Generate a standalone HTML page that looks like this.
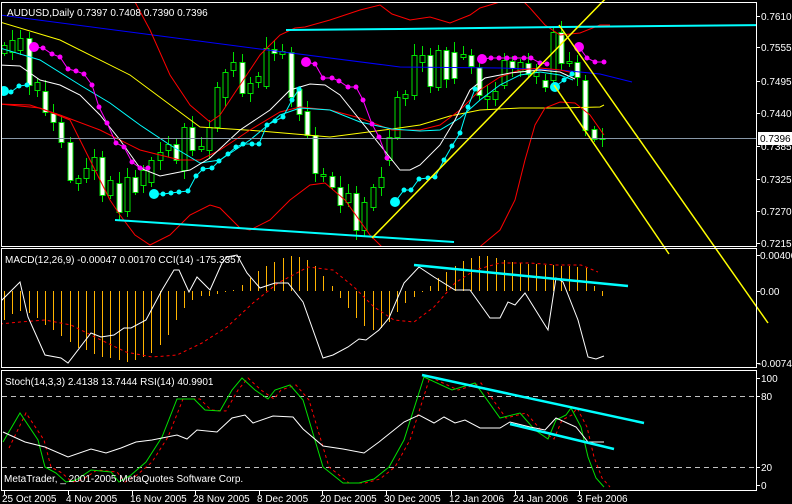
<!DOCTYPE html>
<html><head><meta charset="utf-8">
<style>
html,body{margin:0;padding:0;background:#000;overflow:hidden}
svg{display:block}
text{font-family:"Liberation Sans",sans-serif;font-size:10px;fill:#fff}
</style></head>
<body>
<svg id="c" width="792" height="504" viewBox="0 0 792 504" xmlns="http://www.w3.org/2000/svg">
<defs>
<clipPath id="cm"><rect x="2" y="3" width="754" height="243"/></clipPath>
<clipPath id="cd"><rect x="2" y="250" width="754" height="117"/></clipPath>
<clipPath id="cs"><rect x="2" y="372" width="754" height="118"/></clipPath>
</defs>
<rect width="792" height="504" fill="#000"/>
<g id="gm" clip-path="url(#cm)"></g>
<g id="gd" clip-path="url(#cd)"></g>
<g id="gs" clip-path="url(#cs)"></g>
<g id="top"></g>
<g fill="none" stroke="#fff" stroke-width="1">
<rect x="1.5" y="2.5" width="755" height="244"/>
<rect x="1.5" y="248.5" width="755" height="119"/>
<rect x="1.5" y="370.5" width="755" height="120"/>
</g>
<g id="ticks" stroke="#fff"></g>
<text x="7" y="16">AUDUSD,Daily  0.7397 0.7408 0.7390 0.7396</text>
<text x="5" y="263">MACD(12,26,9) -0.00047 0.00170  CCI(14) -175.3357</text>
<text x="5" y="385">Stoch(14,3,3) 2.4138 13.7444  RSI(14) 40.9901</text>
<text x="4" y="482">MetaTrader, _ 2001-2005 MetaQuotes Software Corp.</text>
<g>
<text x="761" y="20">0.7610</text>
<text x="761" y="51">0.7555</text>
<text x="761" y="85">0.7495</text>
<text x="761" y="117">0.7440</text>
<text x="761" y="150">0.7385</text>
<text x="761" y="183">0.7325</text>
<text x="761" y="215">0.7270</text>
<text x="761" y="247">0.7215</text>
<rect x="758" y="132" width="34" height="13" fill="#fff"/>
<text x="760" y="142" style="fill:#000">0.7396</text>
<text x="760" y="259">0.00406</text>
<text x="760" y="295">0.00</text>
<text x="758" y="367">-0.00747</text>
<text x="761" y="382">100</text>
<text x="761" y="400">80</text>
<text x="761" y="471">20</text>
<text x="761" y="489">0</text>
</g>
<g>
<text x="2" y="502">25 Oct 2005</text>
<text x="66" y="502">4 Nov 2005</text>
<text x="130" y="502">16 Nov 2005</text>
<text x="193" y="502">28 Nov 2005</text>
<text x="257" y="502">8 Dec 2005</text>
<text x="320" y="502">20 Dec 2005</text>
<text x="384" y="502">30 Dec 2005</text>
<text x="449" y="502">12 Jan 2006</text>
<text x="513" y="502">24 Jan 2006</text>
<text x="577" y="502">3 Feb 2006</text>
</g>
</svg>
<script>
var NS="http://www.w3.org/2000/svg";
function el(g,t,a){var e=document.createElementNS(NS,t);for(var k in a)e.setAttribute(k,a[k]);document.getElementById(g).appendChild(e);return e;}
function pl(g,pts,col,w,dash){var s=[];for(var i=0;i<pts.length;i+=2)s.push(pts[i]+","+pts[i+1]);var a={points:s.join(" "),fill:"none",stroke:col,"stroke-width":w||1};if(dash)a["stroke-dasharray"]=dash;return el(g,"polyline",a);}
function X(i){return 4+i*8.19;}
var C=[[45,53,1],[40,52,1],[38,50,1],[38,85,0],[82,90,1],[91,112,0],[113,122,0],[122,142,0],[142,180,0],[178,183,1],[168,178,1],[157,170,1],[157,195,0],[180,195,1],[183,212,0],[177,211,1],[177,192,0],[170,185,1],[160,182,1],[152,160,1],[144,150,1],[144,160,0],[127,170,1],[127,150,0],[146,149,1],[127,150,1],[87,127,1],[72,97,1],[62,70,1],[62,93,0],[83,93,1],[76,82,1],[48,86,1],[49,53,0],[51,54,1],[52,97,0],[89,114,0],[111,135,0],[135,173,0],[174,176,1],[176,187,0],[187,205,0],[193,202,1],[193,230,0],[202,230,1],[187,207,1],[177,187,1],[137,160,1],[97,137,1],[94,98,1],[55,95,1],[55,62,1],[55,86,0],[50,87,1],[50,79,0],[52,78,0],[54,57,1],[55,66,0],[67,95,0],[96,99,1],[91,99,1],[60,85,1],[61,68,0],[62,71,1],[63,74,0],[72,76,1],[80,87,0],[32,80,1],[32,63,0],[61,63,1],[62,77,0],[80,130,0],[129,139,0],[138,139,1]];
for(var i=0;i<C.length;i++){var x=Math.round(X(i))+.5,c=C[i],hi=c[0]-(3+(i*7)%9),lo=c[1]+(3+(i*5)%8);
el("gm","line",{x1:x,y1:hi,x2:x,y2:lo,stroke:"#00e000"});
var h=Math.max(c[1]-c[0],1);
el("gm","rect",{x:x-2.5,y:c[0]+.5,width:5,height:h,fill:c[2]?"#000":"#fff",stroke:"#00e000"});}
pl("gm",[0,15,130,32,260,49,400,67,500,68,560,70,600,74,632,82],"#0000ff",1);
pl("gm",[0,22,60,40,130,75,200,127,260,131,330,137,392,129,420,125,450,116,480,110,520,108,560,108,600,107,604,105],"#ffff00",1);
pl("gm",[135,2,150,30,170,75,190,105,210,122,220,115,240,85,260,55,280,35,295,28,305,27,330,20,360,10,380,5,392,14,410,20,430,17,450,23,470,15,480,8,500,2,520,-2,530,8,545,25,560,35,580,33,600,25,610,25],"#ff0000",1);
pl("gm",[0,104,40,108,70,120,90,160,110,200,120,215,135,235,150,245,170,235,190,215,210,205,220,208,240,228,250,230,270,220,290,200,310,185,325,183,345,200,370,235,385,250,470,255,482,245,500,230,515,200,525,160,535,125,545,108,560,102,575,103,590,115,604,135],"#ff0000",1);
pl("gm",[0,104,30,105,60,115,100,130,140,150,180,160,200,160,220,150,250,130,280,112,300,107,330,110,360,118,392,130,420,130,440,125,460,110,480,90,500,77,520,70,540,68,560,70,574,73],"#ff0000",1);
pl("gm",[0,48,40,60,80,85,110,103,140,125,170,145,200,163,220,160,250,140,280,115,300,108,330,110,360,122,392,129,420,131,440,130,460,118,480,100,500,85,520,75,540,72,560,75,573,80],"#00ffff",1);
pl("gm",[0,65,20,66,40,80,60,85,80,95,100,115,120,140,140,168,160,176,190,170,210,158,240,130,270,110,290,90,310,84,325,85,340,95,360,120,380,145,400,170,410,170,420,165,440,145,455,120,470,90,485,78,510,73,540,70,560,72,575,79],"#ffffff",1);
el("gm","line",{x1:0,y1:138.5,x2:757,y2:138.5,stroke:"#8898a8"});
function dots(arr,col,big){pl("gm",arr,col,1);for(var i=0;i<arr.length;i+=2){el("gm","circle",{cx:arr[i],cy:arr[i+1],r:(big.indexOf(i/2)>=0)?5:2.5,fill:col});}}
dots([4,91,11,92,19,86,27,85],"#00ffff",[0]);
dots([154,194,163,194,171,193,179,192,188,191,196,176,203,169,212,168,219,161,228,154,236,147,243,144,252,144,259,144,267,125,275,121,283,117,292,100,299,89],"#00ffff",[0]);
dots([395,202,404,190,411,190,419,179,428,178,435,177,444,160,452,146,460,133,468,107,475,89],"#00ffff",[0]);
dots([555,87,564,80,572,74],"#00ffff",[0]);
dots([34,47,43,48,52,54,60,57,68,69,76,71,84,74,92,85,99,107,107,123,116,143,124,147,132,162,140,168,148,168],"#ff00ff",[0]);
dots([306,62,315,64,323,78,332,78,339,81,348,87,356,87,363,100,372,124,379,137,387,158],"#ff00ff",[0]);
dots([482,59,491,58,499,58,507,58,515,58,524,58,531,58,540,63,547,64],"#ff00ff",[0]);
dots([579,47,587,58,595,62,604,62],"#ff00ff",[0]);
pl("gm",[286,30,400,29,560,27,770,25],"#00ffff",2);
pl("gm",[115,220,454,242],"#00ffff",2);
pl("top",[372,238,612,-8],"#ffff00",1.5);
pl("top",[559,25,768,323],"#ffff00",1.5);
pl("top",[554,85,669,254],"#ffff00",1.5);
var H=[320,314,311,313,318,325,330,336,342,348,350,354,357,358,360,362,360,357,353,345,335,320,308,300,296,296,294,292,290,285,278,271,266,262,258,256,257,260,266,276,286,298,308,318,326,330,328,322,312,303,297,292,286,278,272,266,261,258,256,256,258,260,262,263,264,264,265,265,266,266,267,268,286,296];
for(var i=0;i<H.length;i++){var x=Math.round(4+i*(598/(H.length-1)))+.5;el("gd","line",{x1:x,y1:291,x2:x,y2:H[i],stroke:"#ffb400"});}
pl("gd",[0,324,20,322,45,320,71,325,101,340,126,352,152,357,177,355,202,343,227,327,253,303,278,283,308,267,333,270,354,287,374,307,394,320,414,322,434,307,455,283,475,270,500,263,530,263,556,265,581,265,598,272],"#ff0000",1,"3,3");
pl("gd",[0,302,20,282,28,317,45,355,61,358,68,363,91,333,101,337,114,335,124,328,131,328,146,320,162,290,174,270,179,270,189,292,197,277,210,290,222,263,227,257,237,255,247,273,260,288,275,283,288,283,303,302,323,358,333,355,348,347,359,339,366,340,379,330,389,318,404,283,419,267,434,277,455,290,470,290,490,318,500,318,508,302,515,305,525,293,548,330,556,278,563,282,578,320,588,357,596,359,604,356],"#ffffff",1);
pl("gd",[414,265,628,286],"#00ffff",2.5);
el("gs","line",{x1:2,y1:396.5,x2:756,y2:396.5,stroke:"#c0c0c0","stroke-dasharray":"5,4"});
el("gs","line",{x1:2,y1:467.5,x2:756,y2:467.5,stroke:"#c0c0c0","stroke-dasharray":"5,4"});
var K=[3,442,20,413,38,440,45,467,56,473,66,482,76,480,91,470,111,472,119,482,131,475,146,462,162,437,177,399,194,399,205,410,220,411,232,390,242,378,255,390,268,399,275,390,290,385,303,400,323,467,343,483,359,483,374,479,389,467,404,440,424,377,452,390,475,383,500,418,520,413,535,430,548,439,556,420,566,415,571,408,581,427,588,457,596,478,604,487];
var D=[];for(var i=0;i<K.length;i+=2){D.push(K[i]+6,K[i+1]+(i<2?6:0));}
pl("gs",D,"#ff0000",1,"3,3");
pl("gs",K,"#00e000",1);
pl("gs",[3,432,25,442,45,447,68,457,91,449,106,453,121,448,136,442,152,440,177,435,187,439,197,430,217,432,232,418,245,415,253,423,273,416,293,417,303,429,323,446,343,449,364,453,379,442,404,422,419,415,434,423,444,417,455,423,465,420,480,428,500,428,510,422,530,427,545,430,556,418,576,427,588,442,604,442],"#ffffff",1);
pl("gs",[422,375,644,423],"#00ffff",2.5);
pl("gs",[510,424,614,449],"#00ffff",2.5);
var tx=[4,68,132,195,259,322,386,451,515,579];
for(var i=0;i<tx.length;i++)el("ticks","line",{x1:tx[i]+.5,y1:491,x2:tx[i]+.5,y2:495});
var ty=[16,47,81,113,146,179,211,243,255,291,363,378,396,467,485];
for(var i=0;i<ty.length;i++)el("ticks","line",{x1:757,y1:ty[i]+.5,x2:760,y2:ty[i]+.5});
</script>
</body></html>
